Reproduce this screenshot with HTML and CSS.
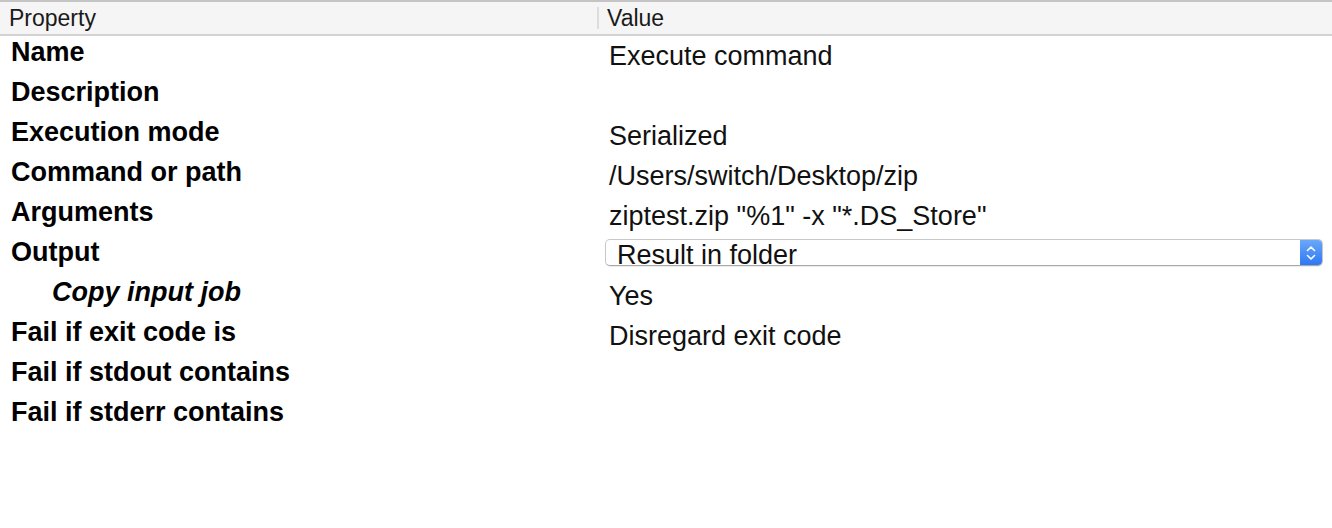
FILE: index.html
```html
<!DOCTYPE html>
<html lang="en">
<head>
  <meta charset="UTF-8">
  <title>Task properties</title>
  <link rel="stylesheet" href="styles.css">
</head>
<body>
  <div class="props">
    <div class="props-head">
      <div class="head-cell">Property</div>
      <div class="head-cell head-value">Value</div>
    </div>

    <!-- property rows -->
    <div class="row"><div class="label">Name</div><div class="value">Execute command</div></div>
    <div class="row"><div class="label">Description</div><div class="value"></div></div>
    <div class="row"><div class="label">Execution mode</div><div class="value">Serialized</div></div>
    <div class="row"><div class="label">Command or path</div><div class="value">/Users/switch/Desktop/zip</div></div>
    <div class="row"><div class="label">Arguments</div><div class="value">ziptest.zip "%1" -x "*.DS_Store"</div></div>
    <div class="row">
      <div class="label">Output</div>
      <div class="value">
        <div class="select">
          <span class="select-text">Result in folder</span>
          <span class="select-btn">
            <svg width="12" height="18" viewBox="0 0 12 18"><path d="M2.5 6.5 L6 3 L9.5 6.5 M2.5 11.5 L6 15 L9.5 11.5" fill="none" stroke="#fff" stroke-width="1.6" stroke-linecap="round" stroke-linejoin="round"/></svg>
          </span>
        </div>
      </div>
    </div>
    <div class="row"><div class="label sub">Copy input job</div><div class="value">Yes</div></div>
    <div class="row"><div class="label">Fail if exit code is</div><div class="value">Disregard exit code</div></div>
    <div class="row"><div class="label">Fail if stdout contains</div><div class="value"></div></div>
    <div class="row"><div class="label">Fail if stderr contains</div><div class="value"></div></div>
  </div>
</body>
</html>
```

FILE: styles.css
```css
body {
  margin: 0;
  background: #fff;
  font-family: "Liberation Sans", Arial, Helvetica, sans-serif;
  color: #000;
}
.props-head {
  display: grid;
  grid-template-columns: 597px 1fr;
  height: 32px;
  background: #f5f5f5;
  border-top: 2px solid #c4c4c4;
  border-bottom: 2px solid #d2d2d2;
}
.head-cell {
  font-size: 23px;
  line-height: 32px;
  padding-left: 9px;
  color: #1a1a1a;
}
.head-value {
  border-left: 2px solid #dcdcdc;
  margin: 5px 0;
  line-height: 22px;
  padding-left: 8px;
}
.row {
  display: grid;
  grid-template-columns: 597px 1fr;
  height: 40px;
}
.label {
  font-weight: bold;
  font-size: 27px;
  line-height: 32px;
  padding-left: 11px;
}
.label.sub {
  font-style: italic;
  padding-left: 52px;
}
.value {
  font-size: 27px;
  line-height: 40px;
  padding-left: 12px;
  color: #111;
}
.select {
  display: flex;
  align-items: center;
  height: 25px;
  margin: 3px 9px 0 -4px;
  border: 1px solid #c8c8c8;
  border-bottom-color: #a8a8a8;
  border-radius: 5px;
  background: #fff;
  box-shadow: 0 1px 1px rgba(0, 0, 0, 0.08);
  overflow: hidden;
}
.select-text {
  flex: 1;
  padding-left: 11px;
  line-height: 26px;
  margin-top: 5px;
}
.select-btn {
  width: 22px;
  height: 100%;
  display: flex;
  align-items: center;
  justify-content: center;
  background: linear-gradient(#6ba8fa, #2d78f4);
}
```
